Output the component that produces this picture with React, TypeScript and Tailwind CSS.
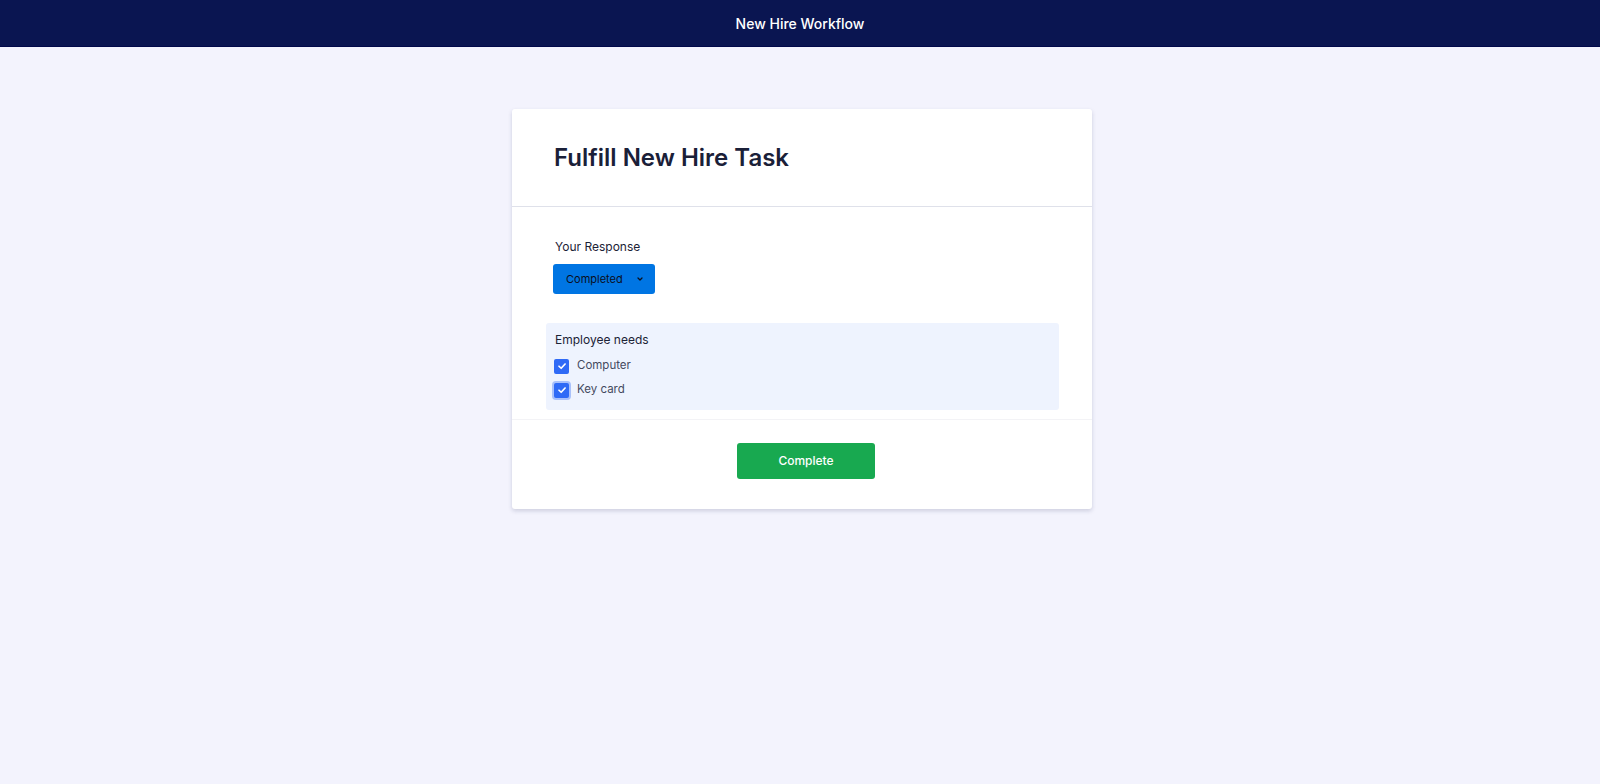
import React from "react";

function Check() {
  return (
    <svg width="10" height="10" viewBox="0 0 12 12" fill="none">
      <path d="M2.4 6.3 L5 8.7 L9.7 3.6" stroke="white" strokeWidth="2" strokeLinecap="round" strokeLinejoin="round" />
    </svg>
  );
}

export default function App() {
  return (
    <div className="min-h-[784px] bg-[#f3f3fd] font-['Inter',sans-serif]">
      <header className="h-[47px] bg-[#0a1551] border-b border-[#01084a] flex items-center justify-center">
        <span className="text-white text-[14px] font-medium">New Hire Workflow</span>
      </header>
      <div className="flex justify-center pl-[4px] pt-[62px]">
        <div className="w-[580px] bg-white rounded-[3px] shadow-[0_2px_4px_rgba(37,45,91,0.18)]">
          <div className="h-[98px] flex items-center pl-[42px] border-b border-[#dfe1ea]">
            <h1 className="text-[24px] leading-[32px] font-semibold text-[#1a2038]">Fulfill New Hire Task</h1>
          </div>
          <div className="pl-[34px] pr-[33px] pt-[32px] pb-[9px] border-b border-[#f3f3f6]">
            <div className="pl-[7px]">
              <div className="text-[12px] leading-[16px] text-[#1c2236] pl-[2px]">Your Response</div>
              <button className="mt-[9px] h-[30px] w-[102px] bg-[#0075e3] rounded-[3px] flex items-center pl-[13px] gap-[13px] text-[11px] text-[#0b0f1c]">
                <span>Completed</span>
                <svg width="8" height="8" viewBox="0 0 10 10" fill="none">
                  <path d="M2.5 3.8 L5 6.2 L7.5 3.8" stroke="#0b0f1c" strokeWidth="1.6" strokeLinecap="round" strokeLinejoin="round" />
                </svg>
              </button>
            </div>
            <div className="mt-[29px] bg-[#eef3fe] rounded-[3px] pt-[9px] pb-[8px] pl-[8px]">
              <div className="text-[12px] leading-[16px] text-[#1c2236] pl-[1px]">Employee needs</div>
              <div className="mt-[6px]">
                <div className="h-[24px] flex items-center gap-[8px]">
                  <span className="w-[15px] h-[15px] rounded-[2px] bg-[#2f6af6] flex items-center justify-center">
                    <Check />
                  </span>
                  <span className="text-[11.5px] text-[#454a5e]">Computer</span>
                </div>
                <div className="h-[24px] flex items-center gap-[8px]">
                  <span className="w-[15px] h-[15px] rounded-[2px] bg-[#2f6af6] flex items-center justify-center ring-[2px] ring-[#a9c1fb]">
                    <Check />
                  </span>
                  <span className="text-[11.5px] text-[#454a5e]">Key card</span>
                </div>
              </div>
            </div>
          </div>
          <div className="h-[89px] flex justify-center pl-[8px] pt-[23px]">
            <button className="w-[138px] h-[36px] rounded-[3px] bg-[#18a950] text-white text-[12px] font-medium">Complete</button>
          </div>
        </div>
      </div>
    </div>
  );
}
